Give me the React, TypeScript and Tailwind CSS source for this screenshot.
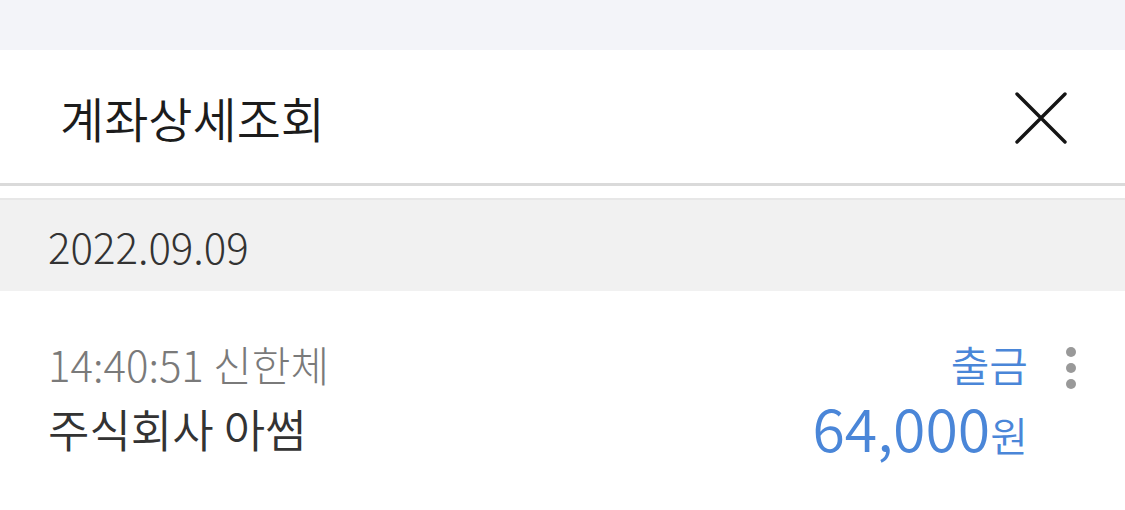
import React from "react";

export default function App() {
  const font = { fontFamily: '"Noto Sans CJK KR", "Noto Sans", sans-serif' };
  return (
    <div className="w-[1125px] h-[510px] bg-white flex flex-col overflow-hidden" style={font}>
      <div className="h-[50px] bg-[#f3f4f9]" />
      <div className="h-[133px] flex items-center justify-between pl-[60px] pr-[56px]">
        <div className="text-[48px] leading-none text-[#1c1c1c] font-[350]">계좌상세조회</div>
        <svg width="56" height="56" viewBox="0 0 56 56" className="mt-[2px]">
          <path d="M4 4 L52 52 M52 4 L4 52" stroke="#151515" strokeWidth="3.4" strokeLinecap="round" />
        </svg>
      </div>
      <div className="h-[3px] bg-[#dadada]" />
      <div className="h-[12px] bg-white" />
      <div className="h-[93px] bg-[#f1f1f1] border-t-2 border-[#e7e7e7] flex items-center pl-[48px]">
        <span className="text-[42px] leading-none text-[#333333] font-light">2022.09.09</span>
      </div>
      <div className="flex justify-between pl-[48px] pr-[49px] pt-[52px]">
        <div className="flex flex-col">
          <span className="text-[42px] leading-none text-[#7a7a7a] font-light">14:40:51 신한체</span>
          <span className="text-[45px] leading-none text-[#333333] mt-[21px] font-[350]">주식회사 아썸</span>
        </div>
        <div className="flex items-start gap-[38px]">
          <div className="flex flex-col items-end">
            <span className="text-[42px] leading-none text-[#4a86d8] font-[350]">출금</span>
            <div className="flex items-baseline leading-none text-[#4a86d8] mt-[12px] font-[350] whitespace-nowrap">
              <span className="text-[59px] leading-none">64,000</span>
              <span className="text-[41px] leading-none">원</span>
            </div>
          </div>
          <div className="flex flex-col gap-[6px] pt-[4px]">
            <div className="w-[10px] h-[10px] rounded-full bg-[#999999]" />
            <div className="w-[10px] h-[10px] rounded-full bg-[#999999]" />
            <div className="w-[10px] h-[10px] rounded-full bg-[#999999]" />
          </div>
        </div>
      </div>
    </div>
  );
}
